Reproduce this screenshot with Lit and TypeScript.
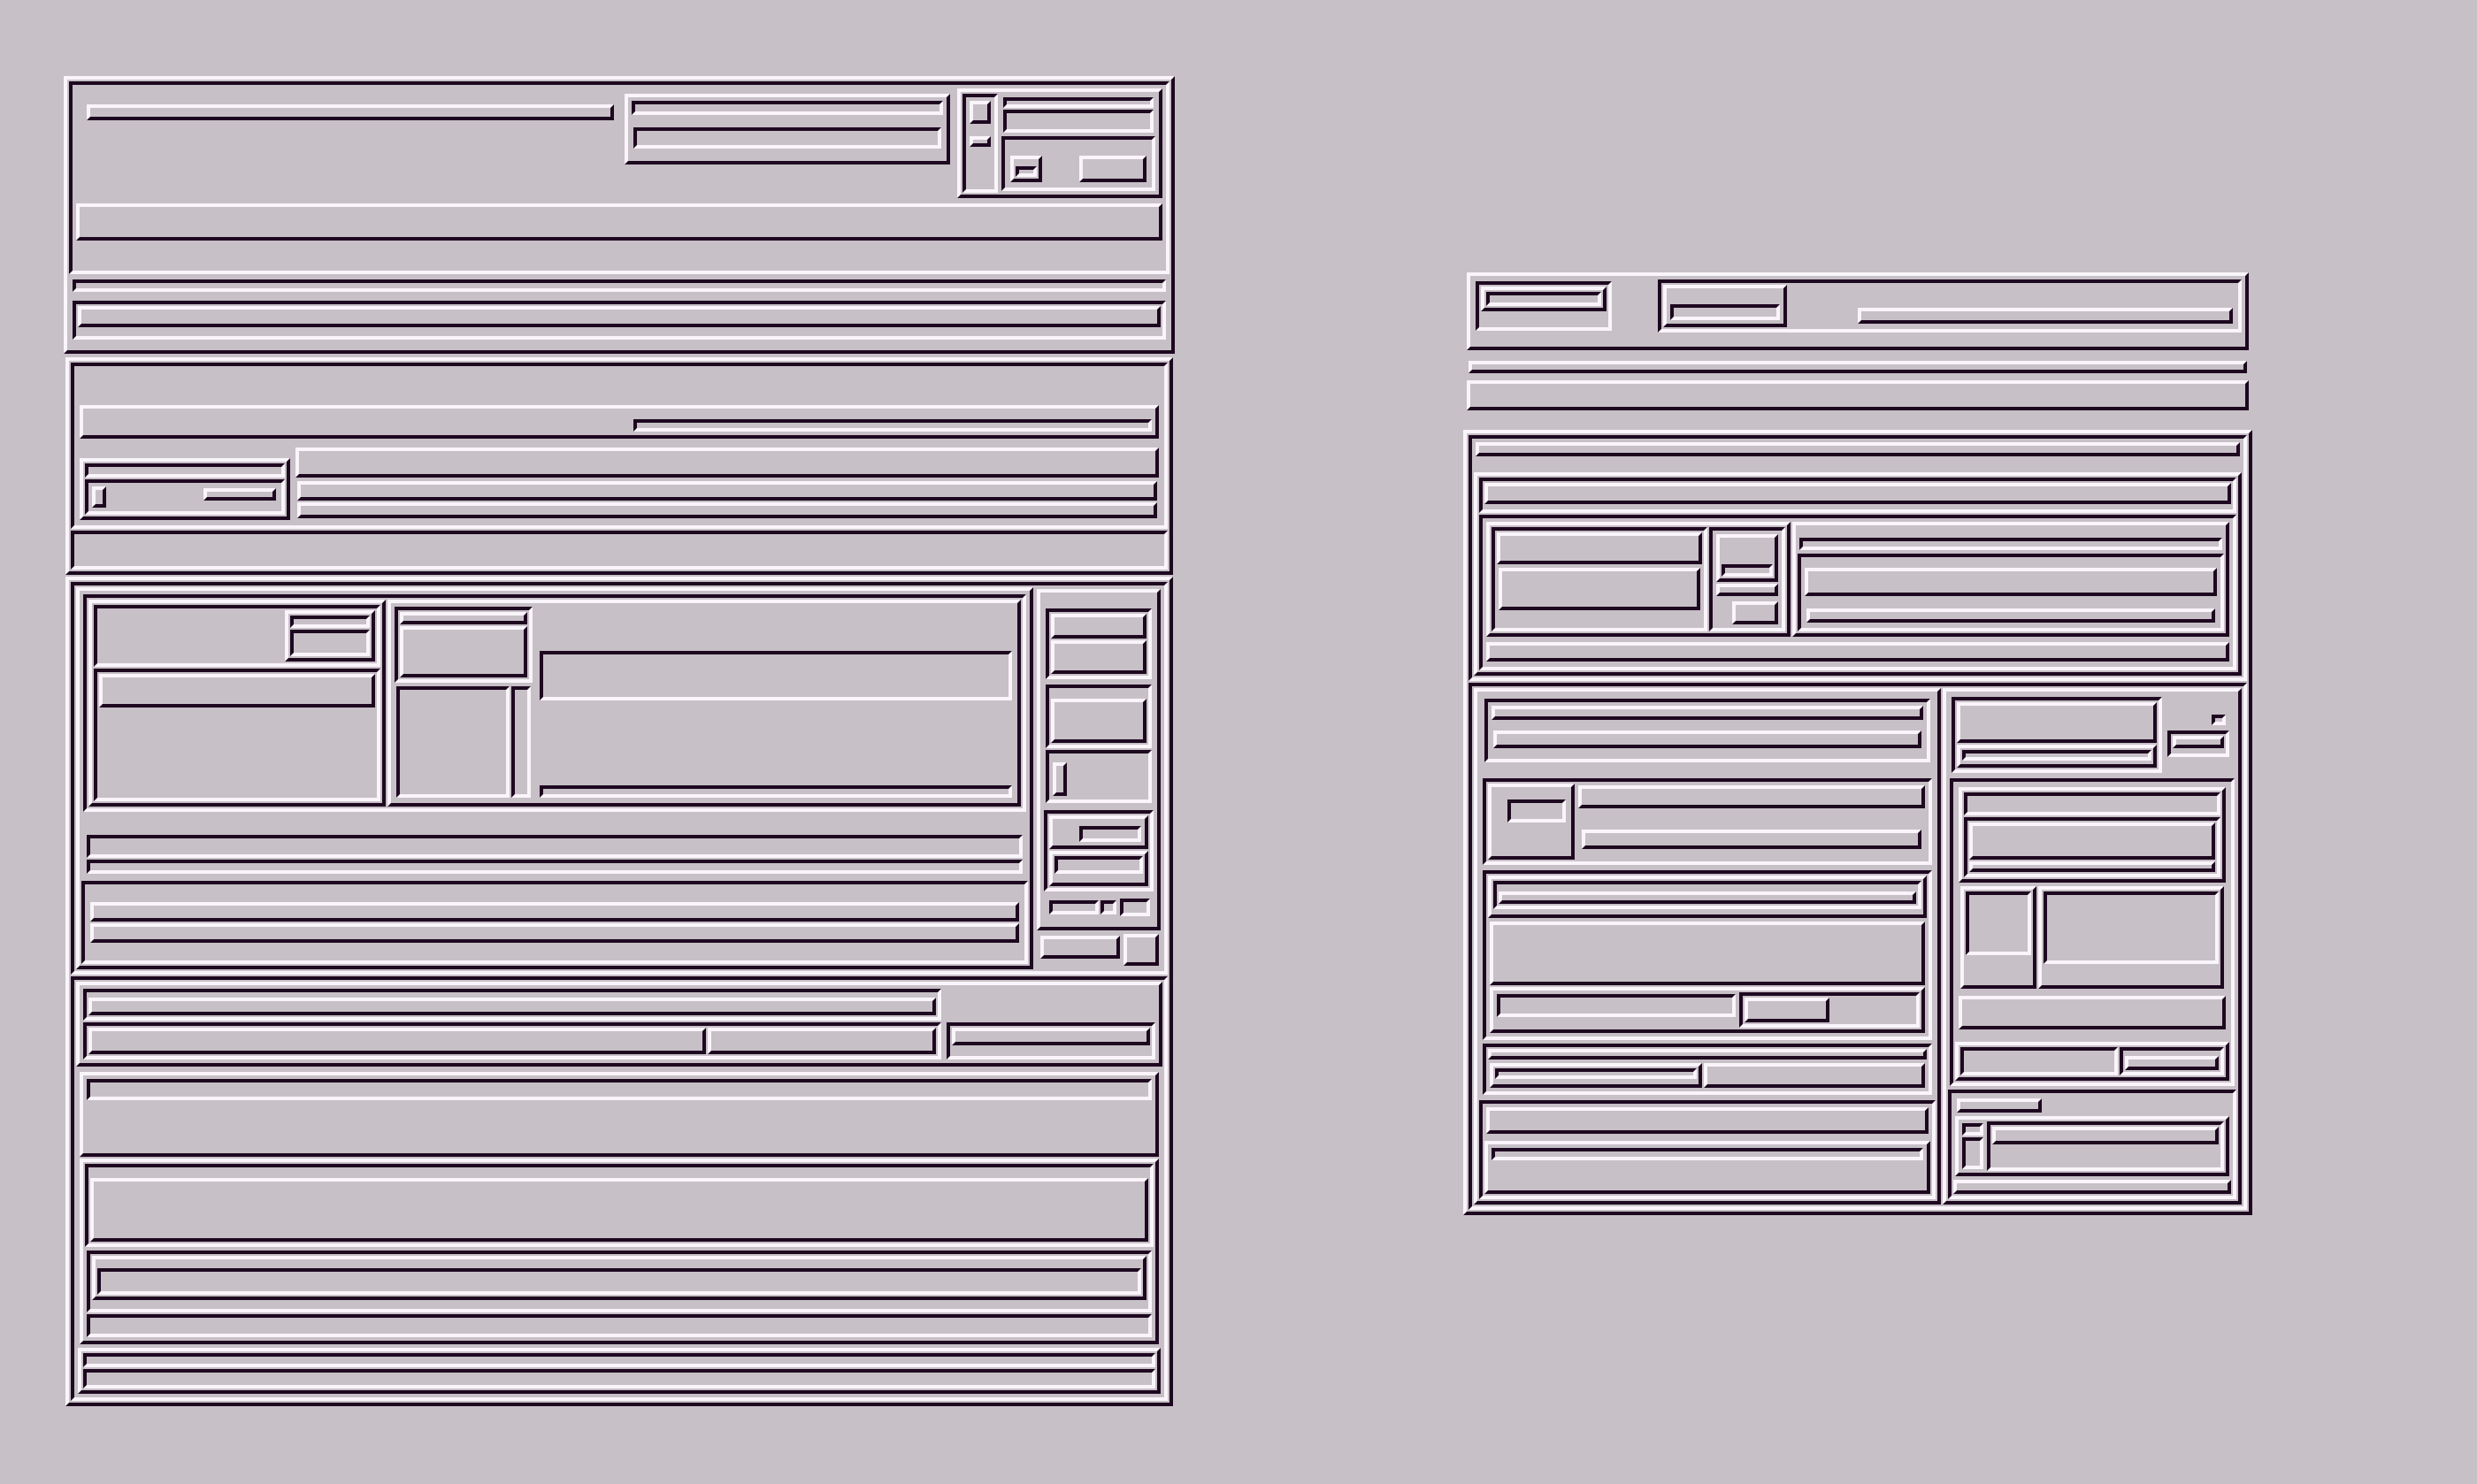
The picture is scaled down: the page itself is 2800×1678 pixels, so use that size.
import { LitElement, html, css, TemplateResult } from "lit";
import { customElement } from "lit/decorators.js";
import { styleMap } from "lit/directives/style-map.js";
import { classMap } from "lit/directives/class-map.js";

/** Space round a block, as top, right, bottom, left. */
type Space = [number, number, number, number];

interface Block {
  framed: boolean;
  space: Space;
  height?: number;
  /** Relative column widths; a block without them stacks its children. */
  columns?: number[];
  children: Block[];
}

const NONE: Space = [0, 0, 0, 0];
const SNUG: Space = [2, 2, 2, 2];
const FIRST: Space = [2, 2, 0, 2];

/** A bevelled bar with nothing inside. */
const bar = (space: Space, height: number): Block => ({ framed: true, space, height, children: [] });
/** A bevelled frame that stacks its children. */
const stack = (space: Space, ...children: Block[]): Block => ({ framed: true, space, children });
/** A bevelled frame that sets its children side by side. */
const split = (space: Space, columns: number[], ...children: Block[]): Block => ({
  framed: true, space, columns, children,
});
/** Unframed counterparts of stack and split. */
const group = (...children: Block[]): Block => ({ framed: false, space: NONE, children });
const line = (columns: number[], ...children: Block[]): Block => ({
  framed: false, space: NONE, columns, children,
});
const gap = (): Block => group();

const header = stack(NONE,
  stack(FIRST,
    line([618, 378, 240],
      bar([22, 6, 0, 16], 18),
      stack([10, 4, 0, 6], bar([4, 4, 0, 4], 16), bar([14, 6, 14, 6], 24)),
      split([4, 4, 0, 4], [44, 180],
        stack(SNUG, bar([4, 4, 0, 4], 26), bar([14, 4, 48, 4], 12)),
        group(
          bar([6, 6, 0, 4], 12),
          bar([2, 6, 0, 4], 26),
          split([4, 4, 0, 2], [60, 106],
            stack([18, 18, 6, 6], bar([8, 2, 2, 2], 12)),
            bar([18, 6, 0, 24], 30),
          ),
        ),
      ),
    ),
    bar([6, 4, 34, 4], 42),
  ),
  bar([6, 6, 0, 6], 14),
  stack([10, 6, 12, 6], bar([2, 2, 10, 2], 24)),
);

const middle = stack([4, 2, 0, 2],
  stack(FIRST,
    split([44, 6, 0, 6], [620, 592], gap(), bar([12, 4, 4, 2], 14)),
    line([248, 984],
      stack([22, 4, 6, 6],
        bar(FIRST, 16),
        split(SNUG, [22, 104, 92], bar([4, 2, 4, 4], 24), gap(), bar([6, 6, 0, 4], 14)),
      ),
      group(bar([10, 6, 0, 2], 34), bar([4, 8, 0, 4], 22), bar([2, 8, 0, 4], 18)),
    ),
  ),
  bar(SNUG, 44),
);

const workspace = split(FIRST, [1086, 146],
  stack(SNUG,
    split([4, 4, 0, 4], [340, 718],
      stack(SNUG,
        split(FIRST, [210, 106], gap(), stack(SNUG, bar(FIRST, 14), bar(SNUG, 30))),
        stack(SNUG, bar([2, 2, 102, 2], 38)),
      ),
      split([2, 2, 2, 0], [164, 544],
        group(
          stack([4, 4, 0, 4], bar(FIRST, 14), bar(SNUG, 58)),
          line([136, 28], bar([4, 2, 6, 6], 126), bar([4, 6, 6, 0], 126)),
        ),
        group(bar([54, 6, 0, 4], 56), bar([96, 6, 6, 4], 14)),
      ),
    ),
    bar([26, 8, 0, 8], 26),
    bar([2, 8, 0, 8], 16),
    stack([8, 2, 2, 2], bar([20, 6, 0, 6], 22), bar([2, 6, 20, 6], 22)),
  ),
  group(
    stack([4, 4, 0, 2],
      stack([18, 6, 0, 6], bar(FIRST, 28), bar(SNUG, 38)),
      stack([6, 6, 0, 6], bar([12, 2, 2, 2], 50)),
      split([2, 6, 0, 6], [22, 90], bar([10, 2, 4, 4], 38), gap()),
      stack([8, 4, 0, 4],
        split(FIRST, [28, 76], gap(), bar([8, 4, 4, 2], 18)),
        stack(SNUG, bar([2, 2, 10, 2], 20)),
      ),
      line([68, 20, 44], bar([10, 2, 0, 10], 16), bar([10, 2, 0, 0], 16), bar([8, 8, 12, 2], 20)),
    ),
    line([98, 48], bar([6, 2, 0, 6], 26), bar([4, 6, 6, 2], 36)),
  ),
);

const footer = stack(SNUG,
  split(FIRST, [976, 244],
    group(
      stack([4, 2, 0, 4], bar([6, 2, 2, 2], 20)),
      split([2, 2, 4, 4], [702, 260], bar(SNUG, 30), bar([2, 2, 2, 0], 30)),
    ),
    stack([42, 4, 0, 4], bar([2, 2, 12, 2], 20)),
  ),
  stack([6, 6, 0, 6], bar([4, 4, 60, 4], 24)),
  stack([2, 6, 0, 6],
    stack(FIRST, bar([12, 2, 2, 2], 72)),
    stack([4, 4, 0, 4], stack([2, 2, 10, 2], bar([10, 2, 2, 2], 30))),
    bar([2, 4, 4, 4], 26),
  ),
  stack([4, 4, 4, 4], bar(FIRST, 16), bar(SNUG, 22)),
);

const leftSheet = group(header, middle, stack(FIRST, workspace, footer));

const banner = split([0, 4, 0, 4], [208, 668],
  stack([6, 48, 0, 6], stack([2, 2, 18, 2], bar(SNUG, 16))),
  split([4, 4, 16, 4], [144, 76, 432],
    stack(SNUG, bar([18, 4, 4, 4], 18)),
    gap(),
    bar([28, 6, 0, 2], 18),
  ),
);

const overview = stack(FIRST,
  bar([4, 4, 0, 4], 16),
  stack([18, 2, 2, 2],
    stack(FIRST, bar([2, 2, 6, 2], 24)),
    stack(SNUG,
      line([350, 498],
        split([4, 2, 0, 4], [248, 88],
          stack(SNUG, bar(FIRST, 36), bar([4, 4, 20, 4], 48)),
          stack([2, 2, 2, 0],
            stack([4, 4, 0, 4], bar([30, 2, 2, 2], 14)),
            bar([2, 4, 0, 4], 14),
            bar([6, 4, 4, 22], 26),
          ),
        ),
        stack([4, 4, 0, 0],
          bar([14, 4, 0, 4], 14),
          stack([4, 2, 2, 2], bar([12, 4, 0, 4], 32), bar([14, 6, 6, 6], 16)),
        ),
      ),
      bar([6, 4, 6, 4], 22),
    ),
  ),
);

const detailMain = stack(SNUG,
  stack([8, 8, 0, 8], bar([4, 4, 0, 4], 16), bar([12, 6, 12, 6], 20)),
  split([18, 6, 0, 6], [102, 398],
    stack(SNUG, bar([14, 6, 38, 18], 26)),
    group(bar([4, 4, 0, 2], 26), bar([24, 8, 0, 6], 22)),
  ),
  stack([6, 6, 0, 6],
    stack(FIRST, stack([2, 2, 6, 2], bar([8, 2, 2, 2], 14))),
    bar([4, 4, 0, 4], 72),
    split([2, 4, 4, 4], [276, 208],
      bar([4, 2, 0, 4], 26),
      split(SNUG, [100, 96], bar(SNUG, 28), gap()),
    ),
  ),
  stack([4, 6, 0, 6],
    bar(FIRST, 12),
    line([246, 254], stack([4, 2, 4, 4], bar([2, 2, 6, 2], 12)), bar([4, 4, 4, 0], 28)),
  ),
  stack([6, 2, 2, 2],
    bar([4, 4, 0, 4], 30),
    stack([8, 2, 2, 2], bar([4, 4, 34, 4], 14)),
  ),
);

const detailSide = stack([2, 2, 2, 0],
  line([248, 82],
    stack([6, 4, 0, 6], bar(FIRST, 46), stack(SNUG, bar([2, 2, 4, 2], 12))),
    group(bar([26, 14, 0, 52], 12), stack([6, 10, 0, 2], bar([2, 2, 6, 2], 14))),
  ),
  stack([6, 4, 0, 4],
    stack([6, 6, 0, 6], bar(FIRST, 26), stack(SNUG, bar(FIRST, 42), bar(SNUG, 12))),
    line([96, 218],
      stack([4, 2, 0, 8], bar([2, 2, 34, 2], 72)),
      stack([4, 8, 0, 0], bar([2, 2, 24, 2], 82)),
    ),
    bar([8, 6, 0, 6], 38),
    split([14, 2, 2, 2], [182, 120],
      bar(SNUG, 32),
      stack([2, 2, 2, 0], bar([6, 2, 2, 2], 16)),
    ),
  ),
  stack([4, 2, 2, 2],
    line([104, 214], bar([6, 2, 0, 6], 16), gap()),
    split([4, 4, 0, 4], [30, 272],
      group(bar([4, 2, 0, 4], 14), bar([2, 2, 4, 4], 36)),
      stack(SNUG, bar([2, 2, 26, 2], 20)),
    ),
    bar([4, 2, 2, 2], 16),
  ),
);

const rightSheet = group(
  banner,
  bar([12, 6, 0, 6], 14),
  bar([8, 4, 0, 4], 34),
  stack([22, 0, 0, 0], overview, split(SNUG, [532, 340], detailMain, detailSide)),
);

@customElement("app-root")
export class AppRoot extends LitElement {
  static styles = css`
    :host {
      --face: #c7c0c7;
      --light: #faf5fa;
      --shade: #1e0820;
      display: block;
      min-height: 100vh;
      background: var(--face);
    }
    .page {
      display: grid;
      grid-template-columns: minmax(0, 1fr) minmax(0, 1fr);
      align-items: start;
    }
    .sheet.left {
      padding: 86px 72px 88px;
    }
    .sheet.right {
      padding: 308px 254px 88px;
    }
    .block {
      box-sizing: border-box;
      display: flex;
      flex-direction: column;
      min-width: 0;
    }
    .block.columns {
      display: grid;
      align-items: start;
    }
    .raised,
    .sunken {
      border: 4px solid;
    }
    .raised {
      border-color: var(--light) var(--shade) var(--shade) var(--light);
    }
    .sunken {
      border-color: var(--shade) var(--light) var(--light) var(--shade);
    }
  `;

  /** Frames alternate between raised and sunken as they nest. */
  private draw(block: Block, raised = true): TemplateResult {
    const classes = {
      block: true,
      columns: !!block.columns,
      raised: block.framed && raised,
      sunken: block.framed && !raised,
    };
    const styles: Record<string, string> = {
      margin: block.space.map((n) => `${n}px`).join(" "),
    };
    if (block.height !== undefined) styles.height = `${block.height}px`;
    if (block.columns) {
      styles["grid-template-columns"] = block.columns.map((n) => `minmax(0, ${n}fr)`).join(" ");
    }
    const inner = block.framed ? !raised : raised;
    return html`<div class=${classMap(classes)} style=${styleMap(styles)}>
      ${block.children.map((child) => this.draw(child, inner))}
    </div>`;
  }

  render() {
    return html`
      <main class="page">
        <section class="sheet left">${this.draw(leftSheet)}</section>
        <section class="sheet right">${this.draw(rightSheet)}</section>
      </main>
    `;
  }
}
